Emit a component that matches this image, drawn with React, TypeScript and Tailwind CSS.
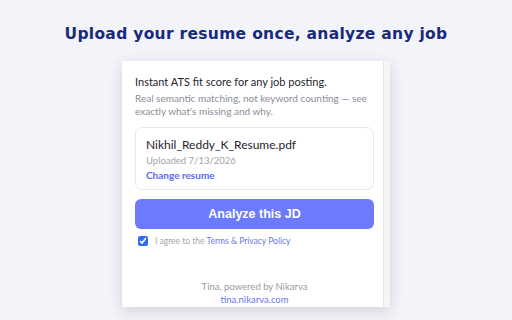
export default function App() {
  return (
    <div className="w-[512px] h-[320px] overflow-hidden bg-[#f3f4f9] flex flex-col items-center">
      <h1 className="mt-[23px] text-[15.5px] leading-[22px] font-bold tracking-[0.3px] text-[#172a7c] [font-family:'DejaVu_Sans',sans-serif]">
        Upload your resume once, analyze any job
      </h1>
      <div className="mt-[16px] w-[268px] h-[246px] bg-white flex shadow-[0_4px_14px_rgba(0,0,0,0.14)] [font-family:Lato,sans-serif]">
        <div className="flex-1 flex flex-col pl-[13px] pr-[9px] pt-[13px]">
          <p className="text-[11px] leading-[16px] text-[#1f2430]">Instant ATS fit score for any job posting.</p>
          <p className="mt-[2px] text-[10px] leading-[13px] text-[#8a8d96]">
            Real semantic matching, not keyword counting — see exactly what's missing and why.
          </p>
          <div className="mt-[9px] h-[63px] rounded-[7px] border border-[#e5e7eb] px-[10px] pt-[9px]">
            <p className="text-[12px] leading-[16px] text-[#1f2430]">Nikhil_Reddy_K_Resume.pdf</p>
            <p className="mt-[1px] text-[9.5px] leading-[13px] text-[#a0a3ab]">Uploaded 7/13/2026</p>
            <p className="mt-[2px] text-[10px] leading-[13px] font-bold text-[#5a6cf5]">Change resume</p>
          </div>
          <button className="mt-[9px] h-[30px] rounded-[6px] bg-[#6b7bfb] text-white text-[12.5px] font-bold [font-family:'Liberation_Sans',sans-serif]">
            Analyze this JD
          </button>
          <label className="mt-[6px] flex items-center gap-[7px] pl-[3px]">
            <input type="checkbox" defaultChecked className="w-[10px] h-[10px] m-0 accent-[#2f6cf0]" />
            <span className="text-[8.5px] text-[#a4a6ad]">
              I agree to the <span className="text-[#6a78e8]">Terms &amp; Privacy Policy</span>
            </span>
          </label>
          <div className="mt-auto pb-[0px] flex flex-col items-center">
            <p className="text-[9.5px] leading-[13px] text-[#9a9ca3]">Tina, powered by Nikarva</p>
            <p className="text-[9.5px] leading-[14px] text-[#6a78f0]">tina.nikarva.com</p>
          </div>
        </div>
        <div className="w-[7px] bg-[#f6f4f4] border-l border-[#e9e4e4]" />
      </div>
    </div>
  );
}
